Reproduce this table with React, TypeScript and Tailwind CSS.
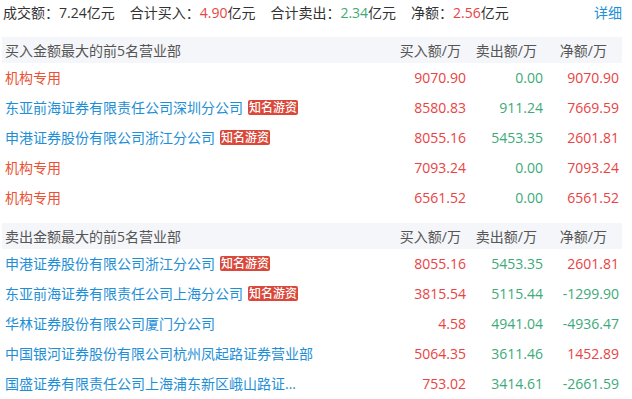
import React from "react";

type Row = { name: string; hot?: boolean; buy: string; sell: string; net: string };

const buyRows: Row[] = [
  { name: "机构专用", buy: "9070.90", sell: "0.00", net: "9070.90" },
  { name: "东亚前海证券有限责任公司深圳分公司", hot: true, buy: "8580.83", sell: "911.24", net: "7669.59" },
  { name: "申港证券股份有限公司浙江分公司", hot: true, buy: "8055.16", sell: "5453.35", net: "2601.81" },
  { name: "机构专用", buy: "7093.24", sell: "0.00", net: "7093.24" },
  { name: "机构专用", buy: "6561.52", sell: "0.00", net: "6561.52" },
];

const sellRows: Row[] = [
  { name: "申港证券股份有限公司浙江分公司", hot: true, buy: "8055.16", sell: "5453.35", net: "2601.81" },
  { name: "东亚前海证券有限责任公司上海分公司", hot: true, buy: "3815.54", sell: "5115.44", net: "-1299.90" },
  { name: "华林证券股份有限公司厦门分公司", buy: "4.58", sell: "4941.04", net: "-4936.47" },
  { name: "中国银河证券股份有限公司杭州凤起路证券营业部", buy: "5064.35", sell: "3611.46", net: "1452.89" },
  { name: "国盛证券有限责任公司上海浦东新区峨山路证...", buy: "753.02", sell: "3414.61", net: "-2661.59" },
];

const RED = "text-[#e94343]";
const GREEN = "text-[#3daa78]";

function tone(v: string) {
  return v.startsWith("-") ? GREEN : RED;
}

function Section({ title, rows }: { title: string; rows: Row[] }) {
  return (
    <div>
      <div className="grid h-[26px] grid-cols-[1fr_77px_77px_76px] items-center bg-[#f4f6f9] pr-[3px] text-[14px] text-[#555]">
        <div className="pl-[3px]">{title}</div>
        <div className="pr-[5px] text-right whitespace-nowrap">买入额/万</div>
        <div className="pr-[6px] text-right whitespace-nowrap">卖出额/万</div>
        <div className="pr-[12px] text-right whitespace-nowrap">净额/万</div>
      </div>
      {rows.map((r, i) => (
        <div key={i} className="grid h-[30px] grid-cols-[1fr_77px_77px_76px] items-center pr-[3px] pb-[1px] text-[14px]">
          <div className="flex items-center pl-[3px] whitespace-nowrap">
            <span className={r.name === "机构专用" ? "text-[#ea5233]" : "text-[#1e8fd6]"}>{r.name}</span>
            {r.hot && (
              <span className="ml-[5px] rounded-[2px] bg-[#d9483a] px-[1px] text-[12px] leading-[15px] font-medium text-white">
                知名游资
              </span>
            )}
          </div>
          <div className={`text-right ${RED}`}>{r.buy}</div>
          <div className={`text-right ${GREEN}`}>{r.sell}</div>
          <div className={`text-right ${tone(r.net)}`}>{r.net}</div>
        </div>
      ))}
    </div>
  );
}

export default function App() {
  return (
    <div
      className="w-[632px] h-[399px] overflow-hidden bg-white pl-[2px] pr-[10px]"
      style={{ fontFamily: "'Open Sans', 'Noto Sans CJK SC', sans-serif" }}
    >
      <div className="flex h-[24px] items-center justify-between text-[14px] text-[#333]">
        <div className="pl-[1px] whitespace-nowrap">
          成交额：7.24亿元
          <span className="ml-[15px]">合计买入：</span>
          <span className={RED}>4.90</span>亿元
          <span className="ml-[15px]">合计卖出：</span>
          <span className={GREEN}>2.34</span>亿元
          <span className="ml-[15px]">净额：</span>
          <span className={RED}>2.56</span>亿元
        </div>
        <div className="text-[#1e8fd6]">详细</div>
      </div>
      <div className="mt-[13px]">
        <Section title="买入金额最大的前5名营业部" rows={buyRows} />
      </div>
      <div className="mt-[10px]">
        <Section title="卖出金额最大的前5名营业部" rows={sellRows} />
      </div>
    </div>
  );
}
